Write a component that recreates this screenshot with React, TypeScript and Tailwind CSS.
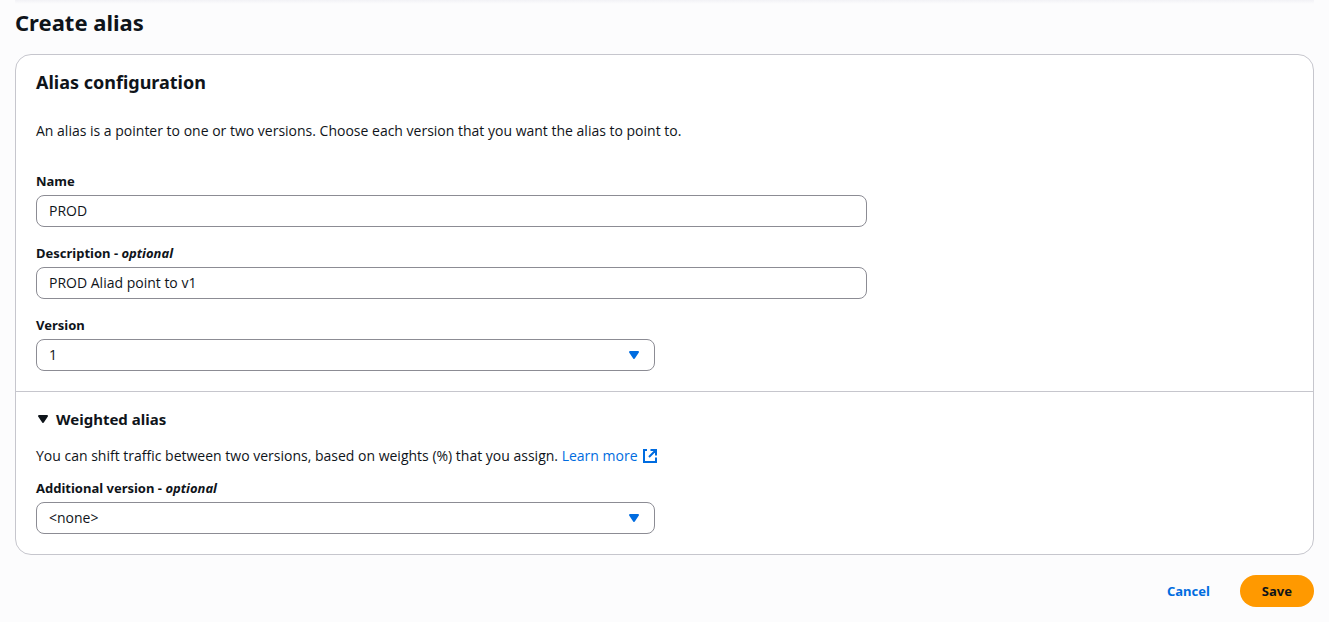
import { useState } from "react";
import type { ReactNode, SelectHTMLAttributes } from "react";

const controlClass =
  "h-8 w-full rounded-lg border border-[#8c8c94] bg-white px-3 text-sm text-[#0f141a] outline-none focus:border-[#006ce0]";

function Field({
  id,
  label,
  optional = false,
  span,
  children,
}: {
  id: string;
  label: string;
  optional?: boolean;
  span: string;
  children: ReactNode;
}) {
  return (
    <div className="grid grid-cols-12 gap-x-5">
      <div className={span}>
        <label htmlFor={id} className="mb-1 block font-['Noto_Sans',sans-serif] text-[13px] leading-5 font-bold">
          {label}
          {optional && (
            <span>
              {" - "}
              <i>optional</i>
            </span>
          )}
        </label>
        {children}
      </div>
    </div>
  );
}

function Select(props: SelectHTMLAttributes<HTMLSelectElement>) {
  return (
    <div className="relative">
      <select {...props} className={`${controlClass} appearance-none`} />
      <Caret className="pointer-events-none absolute top-2 right-3 h-4 w-4 text-[#006ce0]" />
    </div>
  );
}

function Caret({ className }: { className: string }) {
  return (
    <svg viewBox="0 0 16 16" className={className} aria-hidden="true">
      <path
        d="M3 5h8l-4 6-4-6Z"
        fill="currentColor"
        stroke="currentColor"
        strokeWidth="2"
        strokeLinejoin="round"
      />
    </svg>
  );
}

function ExternalIcon() {
  return (
    <svg viewBox="0 0 16 16" className="h-4 w-4" fill="none" stroke="currentColor" strokeWidth="2" aria-hidden="true">
      <path d="M5 2H2v12h12V9.5M8.5 2H14v5.5M14 2 7 9" />
    </svg>
  );
}

export default function App() {
  const [name, setName] = useState("PROD");
  const [description, setDescription] = useState("PROD Aliad point to v1");
  const [open, setOpen] = useState(true);

  return (
    <main className="min-h-screen bg-[#fcfcfd] px-[15px] font-['Open_Sans','Noto_Sans',sans-serif] text-[#0f141a]">
      <div className="h-1 bg-linear-to-b from-[#f2f2f6] to-[#fcfcfd]" />
      <h1 className="pt-0.5 font-['Noto_Sans',sans-serif] text-[22px] leading-8 font-bold">Create alias</h1>

      <form onSubmit={(event) => event.preventDefault()}>
        <div className="mt-4 rounded-2xl border border-[#c6c6cd] bg-white">
          <section className="px-5 pt-[15px] pb-5">
            <h2 className="font-['Noto_Sans',sans-serif] text-lg leading-6 font-bold">Alias configuration</h2>
            <p className="mt-[27px] mb-[30px] text-sm leading-5">
              An alias is a pointer to one or two versions. Choose each version that you want the alias to point to.
            </p>
            <div className="flex flex-col gap-4">
              <Field id="name" label="Name" span="col-span-8">
                <input
                  id="name"
                  className={`${controlClass} pb-0.5`}
                  value={name}
                  onChange={(event) => setName(event.target.value)}
                />
              </Field>
              <Field id="description" label="Description" optional span="col-span-8">
                <input
                  id="description"
                  className={`${controlClass} pb-0.5`}
                  value={description}
                  onChange={(event) => setDescription(event.target.value)}
                />
              </Field>
              <Field id="version" label="Version" span="col-span-6">
                <Select id="version" defaultValue="1">
                  <option>1</option>
                </Select>
              </Field>
            </div>
          </section>

          <section className="border-t border-[#c6c6cd] px-5 pt-[15px] pb-5">
            <h3>
              <button
                type="button"
                aria-expanded={open}
                onClick={() => setOpen(!open)}
                className="flex items-center gap-1 font-['Noto_Sans',sans-serif] text-[15px] leading-6 font-bold"
              >
                <Caret className="h-4 w-4" />
                Weighted alias
              </button>
            </h3>
            {open && (
              <div className="mt-[15px]">
                <p className="mb-3 text-sm leading-5">
                  You can shift traffic between two versions, based on weights (%) that you assign.{" "}
                  <a href="#learn-more" className="inline-flex items-center gap-1 text-[#006ce0]">
                    Learn more
                    <ExternalIcon />
                  </a>
                </p>
                <Field id="additional" label="Additional version" optional span="col-span-6">
                  <Select id="additional" defaultValue="<none>">
                    <option>{"<none>"}</option>
                  </Select>
                </Field>
              </div>
            )}
          </section>
        </div>

        <div className="flex justify-end gap-2 py-5 font-['Noto_Sans',sans-serif] text-[13px] leading-5 font-bold">
          <button type="button" className="h-8 rounded-full px-[22px] text-[#006ce0]">
            Cancel
          </button>
          <button type="submit" className="h-8 rounded-full bg-[#ff9900] px-[22px]">
            Save
          </button>
        </div>
      </form>
    </main>
  );
}
